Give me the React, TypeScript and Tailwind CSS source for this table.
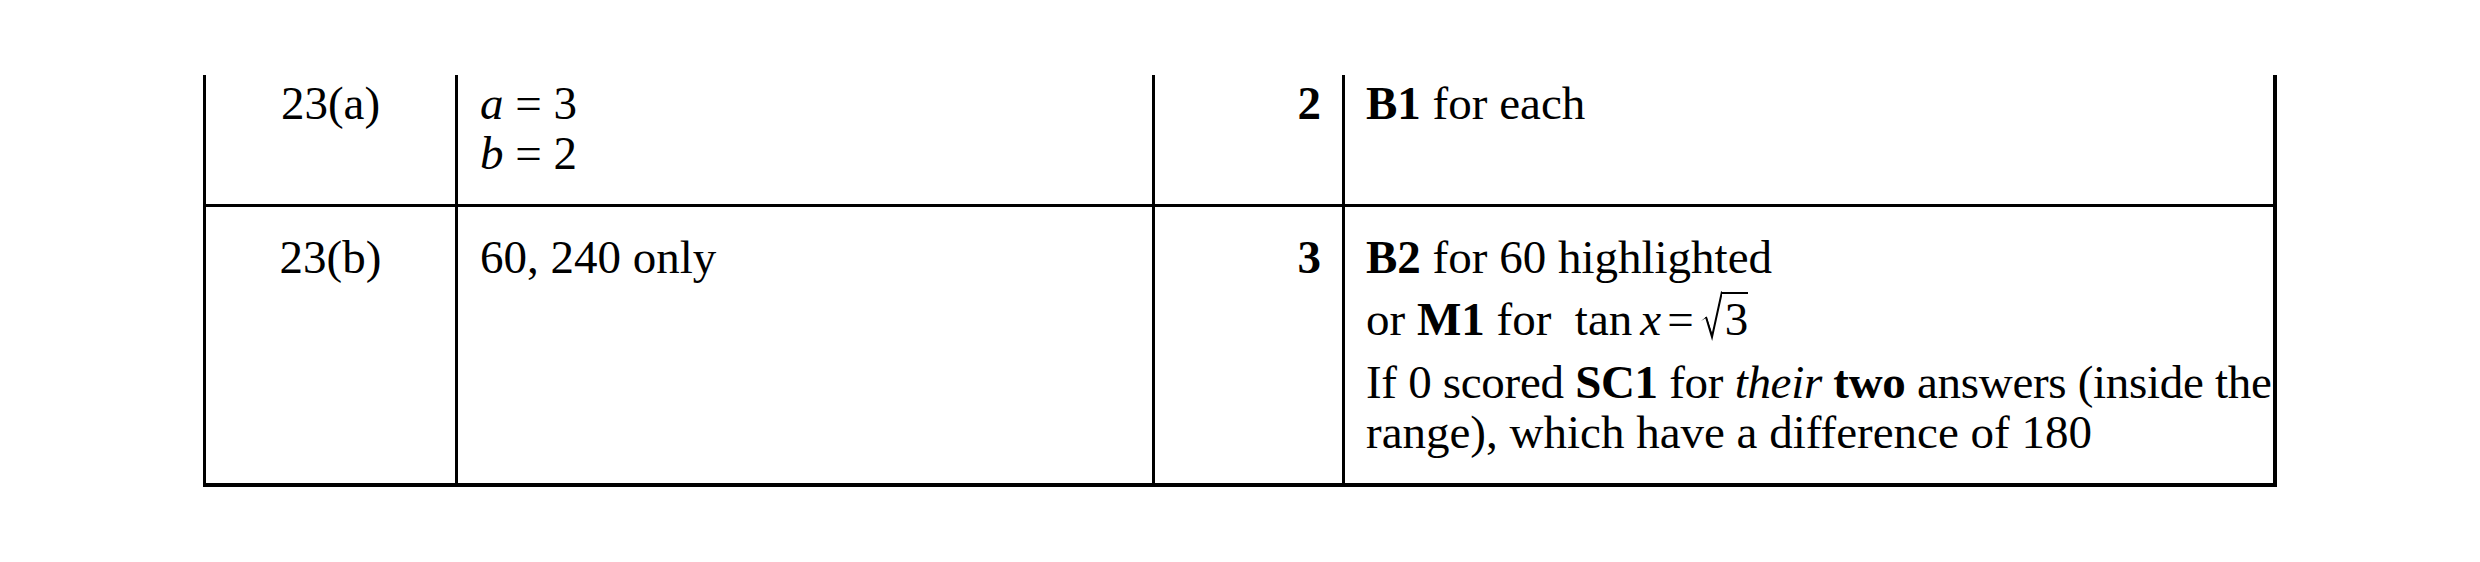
import React from 'react';

// Square root drawn as a small radical; the vinculum is the border over the radicand
function Sqrt({ children }: { children: React.ReactNode }) {
  return (
    <span className="whitespace-nowrap">
      <svg
        width="22"
        height="52"
        viewBox="0 0 22 52"
        className="inline-block align-[-7px]"
        aria-hidden="true"
      >
        <path d="M1 31 L6 28 L12 46 L13 46 L6.5 26.5 Z" fill="black" />
        <path d="M6 27 L12 47 L22 1.5" fill="none" stroke="black" strokeWidth="2" />
      </svg>
      <span className="inline-block border-t-2 border-black leading-[50px] pl-[3px]">{children}</span>
    </span>
  );
}

export default function App() {
  return (
    <div className="w-[2480px] h-[562px] bg-white pt-[75px] pl-[203px] font-['Liberation_Serif','Times_New_Roman',serif] text-[47px] leading-[50px] text-black">
      <div className="w-[2074px] border-l-[3px] border-r-[4px] border-b-[4px] border-black">
        {/* Row 23(a) */}
        <div className="grid grid-cols-[252px_697px_190px_1fr] h-[132px] border-b-[3px] border-black">
          <div className="border-r-[3px] border-black pt-[3px] text-center">23(a)</div>
          <div className="border-r-[3px] border-black pt-[3px] pl-[22px]">
            <div>
              <i>a</i> = 3
            </div>
            <div>
              <i>b</i> = 2
            </div>
          </div>
          <div className="border-r-[3px] border-black pt-[3px] pr-[21px] text-right font-bold">2</div>
          <div className="pt-[3px] pl-[21px]">
            <b>B1</b> for each
          </div>
        </div>

        {/* Row 23(b) */}
        <div className="grid grid-cols-[252px_697px_190px_1fr] h-[276px]">
          <div className="border-r-[3px] border-black pt-[25px] text-center">23(b)</div>
          <div className="border-r-[3px] border-black pt-[25px] pl-[22px]">60, 240 only</div>
          <div className="border-r-[3px] border-black pt-[25px] pr-[21px] text-right font-bold">3</div>
          <div className="pt-[25px] pl-[21px] overflow-hidden whitespace-nowrap">
            <div>
              <b>B2</b> for 60 highlighted
            </div>
            <div className="pt-[8px] pb-[13px]">
              or <b>M1</b> for&nbsp; tan<i className="ml-[8px]">x</i>
              <span className="mx-[6px]">=</span>
              <Sqrt>3</Sqrt>
            </div>
            <div className="tracking-[-0.3px]">
              If 0 scored <b>SC1</b> for <i>their</i> <b>two</b> answers (inside the
            </div>
            <div>range), which have a difference of 180</div>
          </div>
        </div>
      </div>
    </div>
  );
}
